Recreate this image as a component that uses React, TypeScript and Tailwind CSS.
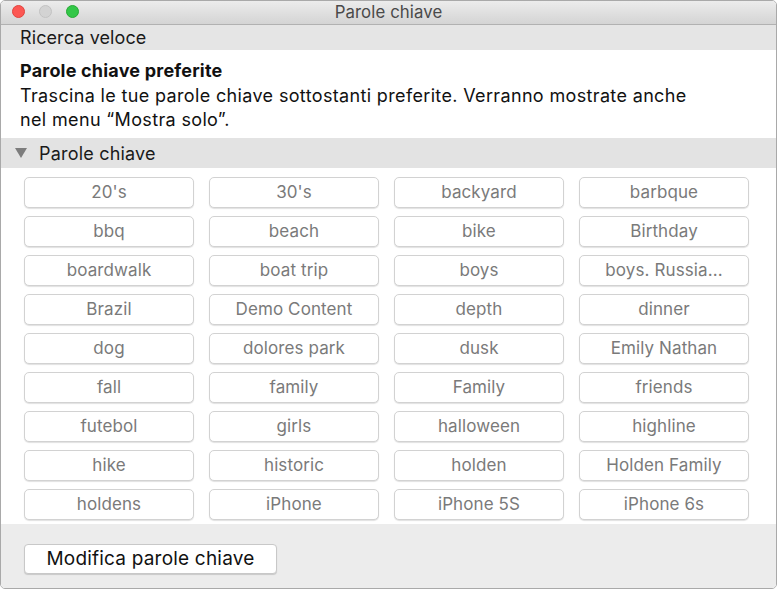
import React from "react";

const keywords = [
  "20's", "30's", "backyard", "barbque",
  "bbq", "beach", "bike", "Birthday",
  "boardwalk", "boat trip", "boys", "boys. Russia...",
  "Brazil", "Demo Content", "depth", "dinner",
  "dog", "dolores park", "dusk", "Emily Nathan",
  "fall", "family", "Family", "friends",
  "futebol", "girls", "halloween", "highline",
  "hike", "historic", "holden", "Holden Family",
  "holdens", "iPhone", "iPhone 5S", "iPhone 6s",
];

export default function App() {
  return (
    <div className="w-[779px] h-[593px] bg-white" style={{ fontFamily: "Inter, 'Noto Sans', sans-serif" }}>
      <div className="w-[777px] h-[589px] border border-[#a9a9a9] rounded-[5px] overflow-hidden flex flex-col">
        {/* Title bar */}
        <div className="h-[24px] shrink-0 bg-gradient-to-b from-[#ececec] to-[#d4d4d4] border-b border-[#b1b1b1] relative flex items-center justify-center">
          <div className="absolute left-[11px] top-[4px] flex gap-[14px]">
            <div className="w-[13px] h-[13px] rounded-full bg-[#fc5753] border border-[#e0443e]" />
            <div className="w-[13px] h-[13px] rounded-full bg-[#d3d3d3] border border-[#c2c2c2]" />
            <div className="w-[13px] h-[13px] rounded-full bg-[#33c748] border border-[#27aa35]" />
          </div>
          <span className="text-[16.8px] text-[#4a4a4a] leading-none tracking-[0.1px]">Parole chiave</span>
        </div>
        {/* Ricerca veloce */}
        <div className="h-[25px] shrink-0 bg-[#e5e5e5] flex items-center pl-[19px]">
          <span className="text-[18px] text-[#1a1a1a] tracking-[0.1px]">Ricerca veloce</span>
        </div>
        {/* Description */}
        <div className="h-[88px] shrink-0 bg-white pl-[19px] pt-[9px] text-[18px] leading-[24.5px] text-[#111] tracking-[0.35px]">
          <div className="font-bold tracking-[0.2px]">Parole chiave preferite</div>
          <div className="w-[690px]">
            Trascina le tue parole chiave sottostanti preferite. Verranno mostrate anche nel menu “Mostra solo”.
          </div>
        </div>
        {/* Section header */}
        <div className="h-[30px] shrink-0 bg-[#e3e3e3] flex items-center pl-[14px]">
          <svg width="12" height="10" viewBox="0 0 12 10" className="mr-[12px]">
            <polygon points="0,0 12,0 6,10" fill="#7d7d7d" />
          </svg>
          <span className="text-[18px] text-[#1a1a1a] tracking-[0.2px]">Parole chiave</span>
        </div>
        {/* Grid */}
        <div className="h-[356px] shrink-0 bg-white pt-[9px] pb-[4px] pl-[23px]">
          <div className="grid grid-cols-[170px_170px_170px_170px] gap-x-[15px] gap-y-[8px]">
            {keywords.map((k, i) => (
              <div
                key={i}
                className="h-[31px] pt-[1px] rounded-[5px] bg-white border border-[#d2d2d2] shadow-[0_1px_1px_rgba(0,0,0,0.12)] flex items-center justify-center text-[17px] text-[#7a7a7a] tracking-[0.1px]"
              >
                {k}
              </div>
            ))}
          </div>
        </div>
        {/* Bottom */}
        <div className="flex-1 bg-[#ececec] pt-[20px] pl-[23px]">
          <div className="w-[253px] h-[30px] pt-[1px] rounded-[4px] bg-white border border-[#c8c8c8] shadow-[0_1px_1px_rgba(0,0,0,0.15)] flex items-center justify-center text-[19px] text-[#111] tracking-[0.2px]">
            Modifica parole chiave
          </div>
        </div>
      </div>
    </div>
  );
}
